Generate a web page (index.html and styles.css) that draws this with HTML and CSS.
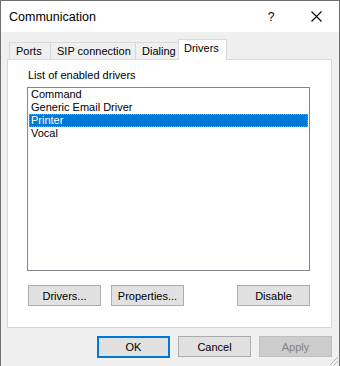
FILE: index.html
```html
<!DOCTYPE html>
<html lang="en">
<head>
    <meta charset="UTF-8">
    <title>Communication</title>
    <link rel="stylesheet" href="styles.css">
</head>
<body>

    <div class="window">
        <!-- Title bar -->
        <div class="titlebar">
            <span class="title">Communication</span>
            <span class="help">?</span>
            <span class="close">
                <svg width="11" height="11" viewBox="0 0 11 11">
                    <path d="M0.5 0.5 L10.5 10.5 M10.5 0.5 L0.5 10.5" stroke="#000" stroke-width="1.1" fill="none"/>
                </svg>
            </span>
        </div>

        <div class="client">
            <!-- Tabs -->
            <div class="tabs">
                <div class="tab tab-ports">Ports</div>
                <div class="tab tab-sip">SIP connection</div>
                <div class="tab tab-dialing">Dialing</div>
                <div class="tab tab-drivers active">Drivers</div>
            </div>

            <div class="panel">
                <div class="panel-label">List of enabled drivers</div>
                <div class="listbox">
                    <div class="item">Command</div>
                    <div class="item">Generic Email Driver</div>
                    <div class="item selected">Printer</div>
                    <div class="item">Vocal</div>
                </div>
                <div class="panel-buttons">
                    <button class="btn">Drivers...</button>
                    <button class="btn">Properties...</button>
                    <span class="spacer"></span>
                    <button class="btn">Disable</button>
                </div>
            </div>

            <div class="dialog-buttons">
                <button class="btn default">OK</button>
                <button class="btn">Cancel</button>
                <button class="btn disabled">Apply</button>
            </div>
            <div class="grip"></div>
        </div>
    </div>

</body>
</html>
```

FILE: styles.css
```css
/* Basic reset */
* {
    margin: 0;
    padding: 0;
    box-sizing: border-box;
}

body {
    font-family: "Liberation Sans", Arial, sans-serif;
    font-size: 11px;
    color: #000;
    background: #fff;
}

/* Window frame */
.window {
    width: 340px;
    height: 366px;
    border: 1px solid #707070;
    border-bottom: none;
    display: flex;
    flex-direction: column;
    background: #f0f0f0;
}

/* Title bar */
.titlebar {
    height: 31px;
    background: #fff;
    display: flex;
    align-items: center;
    padding-left: 8px;
}

.title {
    font-size: 12.5px;
    flex: 1;
    padding-top: 1px;
}

.help {
    font-size: 12px;
    width: 46px;
    text-align: center;
}

.close {
    width: 45px;
    display: flex;
    justify-content: center;
    padding-right: 1px;
}

/* Client area */
.client {
    flex: 1;
    position: relative;
    padding: 0 7px 0 6px;
    display: flex;
    flex-direction: column;
}

.tabs {
    display: flex;
    height: 27px;
    padding-left: 2px;
    align-items: flex-end;
}

.tab {
    height: 17px;
    border: 1px solid #d9d9d9;
    border-bottom: none;
    background: #f0f0f0;
    padding: 2px 0 0 6px;
    margin-left: -1px;
}

.tab-ports { width: 42px; margin-left: 0; }
.tab-sip { width: 86px; }
.tab-dialing { width: 44px; }

.tab.active {
    width: 49px;
    height: 21px;
    background: #fff;
    padding-top: 2px;
    padding-left: 5px;
    margin-bottom: -1px;
    position: relative;
    z-index: 1;
}

.panel {
    background: #fff;
    border: 1px solid #d9d9d9;
    height: 269px;
    padding: 9px 21px 0 19px;
}

.panel-label {
    height: 18px;
    padding-left: 1px;
}

.listbox {
    height: 184px;
    border: 1px solid #828790;
    padding: 0 1px;
}

.item {
    height: 13px;
    line-height: 13px;
    padding-left: 2px;
}

.item.selected {
    background: #0078d7;
    color: #fff;
    outline: 1px dotted #f08a24;
    outline-offset: -1px;
}

.panel-buttons {
    display: flex;
    gap: 10px;
    margin-top: 14px;
    padding-left: 1px;
}

.spacer {
    flex: 1;
}

/* Buttons */
.btn {
    font-family: "Liberation Sans", Arial, sans-serif;
    font-size: 11px;
    width: 73px;
    height: 21px;
    background: #e1e1e1;
    border: 1px solid #adadad;
    color: #000;
}

.btn.default {
    border: 2px solid #0078d7;
    height: 22px;
}

.btn.disabled {
    background: #cccccc;
    border-color: #bfbfbf;
    color: #838383;
}

.dialog-buttons {
    display: flex;
    justify-content: flex-end;
    gap: 8px;
    margin-top: 8px;
}

.grip {
    position: absolute;
    right: 1px;
    bottom: 1px;
    width: 10px;
    height: 10px;
    background: repeating-linear-gradient(135deg, transparent 0 2px, #b5b5b5 2px 3px);
    clip-path: polygon(100% 0, 100% 100%, 0 100%);
}
```
